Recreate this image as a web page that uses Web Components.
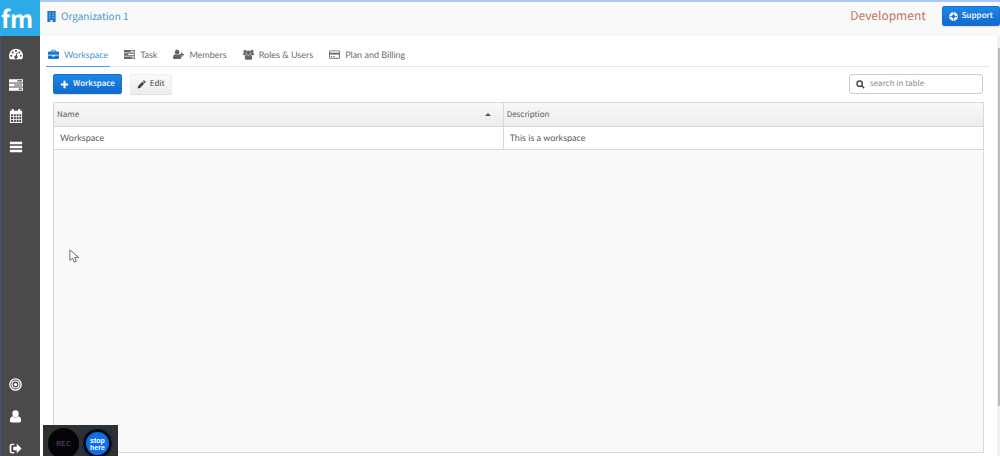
<!DOCTYPE html>
<html lang="en">
<head>
<meta charset="utf-8">
<title>Organization 1</title>
<style>
html, body { height: 100%; }
body { margin: 0; overflow: hidden; font: 8px/14px "Noto Sans CJK SC", "Noto Sans", sans-serif; text-rendering: geometricPrecision; color: #5c5c5c; background: #fff; }
</style>
</head>
<body>
<fm-app></fm-app>
<script>
const ICONS = {
  building: '<path d="M2 0h12v16H9.500v-3h-3v3H2z"/><path fill="#fff" opacity=".5" d="M4.500 2h2v2h-2zM9.500 2h2v2h-2zM4.500 5.500h2v2h-2zM9.500 5.500h2v2h-2zM4.500 9h2v2h-2zM9.500 9h2v2h-2z"/>',
  gauge: '<path d="M8 2a8 8 0 0 0-8 8q0 2.400 1.200 4h13.600Q16 12.400 16 10a8 8 0 0 0-8-8z"/><g fill="#4a4a4a"><circle cx="2.600" cy="10" r="1.100"/><circle cx="4.200" cy="6.200" r="1.100"/><circle cx="8" cy="4.500" r="1.100"/><circle cx="11.800" cy="6.200" r="1.100"/><circle cx="13.400" cy="10" r="1.100"/><path d="M8.900 6.300l.9.300-.8 3.500a1.800 1.800 0 1 1-1.200-.3z"/></g>',
  tasks: '<path fill-rule="evenodd" d="M0 1.500h16v3.600H0zM9.500 2.700v1.200h5.300V2.700zM0 6.200h16v3.600H0zM6 7.400v1.200h8.800V7.400zM0 10.900h16v3.600H0zM11 12.100v1.200h3.800v-1.200z"/>',
  calendar: '<path fill-rule="evenodd" d="M1 2h2V.8q0-.8.8-.8h1q.8 0 .8.800V2h4.800V.8q0-.8.8-.8h1q.8 0 .8.800V2h2v14H1zM2.200 6v2.300h2.500V6zM5.600 6v2.300h2.200V6zM8.700 6v2.300h2.200V6zM11.800 6v2.300h2.100V6zM2.200 9.200v2.300h2.500V9.200zM5.600 9.200v2.300h2.200V9.200zM8.700 9.200v2.300h2.200V9.200zM11.800 9.200v2.300h2.100V9.200zM2.200 12.400v2.400h2.500v-2.400zM5.600 12.400v2.400h2.200v-2.400zM8.700 12.400v2.400h2.200v-2.400zM11.800 12.400v2.400h2.100v-2.400z"/>',
  menu: '<path d="M1 2h14v2.800H1zM1 6.600h14v2.800H1zM1 11.200h14v2.800H1z"/>',
  chevron: '<path d="M2 5l6 6 6-6" fill="none" stroke="currentColor" stroke-width="3"/>',
  target: '<g fill="none" stroke="currentColor"><circle cx="8" cy="8" r="7" stroke-width="1.600"/><circle cx="8" cy="8" r="4.300" stroke-width="1.500"/></g><circle cx="8" cy="8" r="2"/>',
  user: '<ellipse cx="8" cy="4.600" rx="3.900" ry="4.300"/><path d="M4.700 7.600Q8 10.600 11.300 7.600 15 8.700 15 13 15 15.500 12.500 15.500h-9Q1 15.500 1 13 1 8.700 4.700 7.600z"/>',
  exit: '<path d="M6.500 2v1.800H3.800q-1 0-1 1v6.400q0 1 1 1h2.700V14H3.500Q.8 14 .8 11.300V4.700Q.8 2 3.500 2zM5.300 5.700h4.200V2.200L15.500 8l-6 5.800v-3.500H5.300z"/>',
  briefcase: '<path fill-rule="evenodd" d="M5 3.500V2q0-1 1-1h4q1 0 1 1v1.500h3.500Q16 3.500 16 5v3.500H0V5q0-1.500 1.500-1.500zM6.300 2.300v1.200h3.400V2.300zM0 9.400h6.200V11h3.600V9.400H16V13q0 1.500-1.500 1.500h-13Q0 14.500 0 13z"/>',
  adduser: '<ellipse cx="6" cy="4.600" rx="3.300" ry="3.700"/><path d="M3 7.700Q6 10 9 7.700q3 .7 3 4.800 0 2.200-1.900 2.200H1.900q-1.900 0-1.900-2.200 0-4.100 3-4.800z"/><path d="M11.900 5h1.900v2.100H16V9h-2.200v2.200h-1.900V9H9.700V7.100h2.200z"/>',
  group: '<circle cx="3" cy="3.500" r="2.300"/><circle cx="13" cy="3.500" r="2.300"/><circle cx="8" cy="5.500" r="3.200"/><path d="M1 5.500q2 1 3.600 0Q4.600 7 5.600 8 4 8.100 3.400 9H1.500Q0 9 0 7.500 0 6 1 5.500zM15 5.500q-2 1-3.600 0 0 1.500-1 2.500 1.600.1 2.200 1h1.900Q16 9 16 7.500 16 6 15 5.500zM5.400 8.300q2.600 2 5.200 0 2.900.7 2.900 4.500 0 2.700-2 2.700H4.500q-2 0-2-2.700 0-3.800 2.900-4.500z"/>',
  card: '<path fill-rule="evenodd" d="M1.500 2h13Q16 2 16 3.500v9q0 1.500-1.500 1.500h-13Q0 14 0 12.500v-9Q0 2 1.500 2zM1.200 3.400v2.200h13.600V3.400zM1.200 8v4.700h13.600V8zM2.400 10.600h2v1h-2zM5.500 10.600h3v1h-3z"/>',
  plus: '<path d="M6.200 1.500h3.600v4.700h4.700v3.600H9.800v4.700H6.200V9.800H1.500V6.200h4.700z"/>',
  pencil: '<path d="M1 15l1-4.500L9.300 3.200l3.500 3.500L5.500 14zM10.300 2.200L11.600.9q.8-.7 1.500 0l2 2q.7.700 0 1.500l-1.300 1.300z"/>',
  search: '<circle cx="6.500" cy="6.500" r="4.800" fill="none" stroke="currentColor" stroke-width="2.400"/><path d="M9.500 11l1.700-1.700 4.300 4.300-1.700 1.800z"/>',
  support: '<circle cx="8" cy="8" r="5.500" fill="none" stroke="currentColor" stroke-width="4.500"/><path d="M7.200 1.600h1.600v3H7.200zM7.200 11.400h1.600v3H7.200zM1.600 7.200h3v1.600h-3zM11.400 7.200h3v1.600h-3z" fill="#1978dc"/>',
  pointer: '<path d="M1 1v12l3-2.600 2 4.600 2.400-1-2-4.500H11z" fill="#fff" stroke="#666" stroke-width="1.100"/>'
};

function define(name, template) {
  customElements.define(name, class extends HTMLElement {
    constructor() {
      super();
      this.attachShadow({ mode: "open" }).innerHTML =
        typeof template === "function" ? template(this) : template;
    }
  });
}

define("fm-icon", el => `
<style>:host{display:block;flex:none;width:11px;height:11px}svg{display:block;width:100%;height:100%}</style>
<svg viewBox="0 0 16 16" fill="currentColor" aria-hidden="true">${ICONS[el.getAttribute("name")]}</svg>`);

define("fm-button", `
<style>
:host{display:block;flex:none}
button{display:flex;align-items:center;gap:4px;box-sizing:border-box;height:20px;margin:0;padding:0 6px;border:1px solid #eee;border-radius:2px;background:linear-gradient(#fafafa,#ededed);box-shadow:0 1px 1px #ddd;color:#444;font:inherit;text-rendering:inherit;white-space:nowrap}
:host([primary]) button{background:linear-gradient(#1e87e5,#1269cf);border-color:#1671d4;color:#fff;font-weight:500}
::slotted(fm-icon){width:9px;height:9px}
</style>
<button type="button"><slot name="icon"></slot><slot></slot></button>`);

define("fm-sidebar", `
<style>
:host{display:flex;flex-direction:column;box-sizing:border-box;width:40px;flex:none;background:#4a4a4a;color:#fff}
.logo{display:block;height:36px;flex:none;padding-left:1px;background:#2cabe6;color:#fff;font:700 24px/36px "Noto Sans CJK SC",sans-serif;text-decoration:none}
nav{flex:1;display:flex;flex-direction:column;justify-content:space-between;border-left:1px solid #3e5577;padding:11px 0 0}
div{display:flex;flex-direction:column;gap:17px;padding-left:8px}
.bottom{gap:19px;margin-bottom:1px}
nav a{display:flex;align-items:center;gap:5px;color:#fff}
fm-icon{width:14px;height:14px}
.bottom fm-icon{width:13px;height:13px}
fm-icon.more{width:6px;height:6px;color:#34547c}
</style>
<a class="logo" href="#">fm</a>
<nav aria-label="Main">
<div>
<a href="#" aria-label="Dashboard"><fm-icon name="gauge"></fm-icon></a>
<a href="#" aria-label="Tasks"><fm-icon name="tasks"></fm-icon></a>
<a href="#" aria-label="Calendar"><fm-icon name="calendar"></fm-icon></a>
<a href="#" aria-label="Menu"><fm-icon name="menu"></fm-icon><fm-icon class="more" name="chevron"></fm-icon></a>
</div>
<div class="bottom">
<a href="#" aria-label="Focus"><fm-icon name="target"></fm-icon></a>
<a href="#" aria-label="Profile"><fm-icon name="user"></fm-icon></a>
<a href="#" aria-label="Log out"><fm-icon name="exit"></fm-icon></a>
</div>
</nav>`);

define("fm-header", `
<style>
:host{display:flex;align-items:center;box-sizing:border-box;height:36px;flex:none;padding:0 0 6px 6px;background:#f9f9f9;border-top:2px solid #a9c8f5;overflow:hidden}
a{display:flex;align-items:center;gap:4px;color:#4a94cf;text-decoration:none;font-size:10px}
a fm-icon{color:#1b76cf}
strong{margin:0 16px 0 auto;color:#b9776c;font-size:12px;line-height:18px;font-weight:400}
</style>
<a href="#"><fm-icon name="building"></fm-icon>Organization 1</a>
<strong>Development</strong>
<fm-button primary><fm-icon slot="icon" name="support"></fm-icon>Support</fm-button>`);

define("fm-tab", el => `
<style>
:host{display:block}
a{display:flex;align-items:center;gap:5px;box-sizing:border-box;height:24px;padding:0 2px;border-bottom:1px solid transparent;color:#6c6c6c;font:9px/14px Lato,sans-serif;text-decoration:none;white-space:nowrap}
:host([selected]) a{color:#4a94cf;border-color:#4f9ddb}
:host([selected]) fm-icon{color:#1b76cf}
fm-icon{color:#666}
</style>
<a href="#"${el.hasAttribute("selected") ? ' aria-current="page"' : ""}><fm-icon name="${el.getAttribute("icon")}"></fm-icon><slot></slot></a>`);

define("fm-tabs", `
<style>:host{display:flex;gap:12px;margin:7px 7px 0 6px;box-shadow:inset 0 -1px #e6e6e6}</style><slot></slot>`);

define("fm-search", `
<style>
:host{display:block;margin-left:auto}
label{display:flex;align-items:center;gap:5px;box-sizing:border-box;width:134px;height:20px;padding:0 6px;border:1px solid #ccc;border-radius:3px;background:#fff;color:#444}
fm-icon{width:9px;height:9px}
input{flex:1;min-width:0;border:0;padding:0;outline:0;background:none;font:inherit;text-rendering:inherit;color:#555}
input::placeholder{color:#8c8c8c;opacity:1}
</style>
<label><fm-icon name="search"></fm-icon><input type="search" placeholder="search in table" aria-label="search in table"></label>`);

define("fm-table", `
<style>
:host{display:block;flex:1;border:1px solid #d8d8d8;background:#f9f9f9}
table{width:100%;table-layout:fixed;border-collapse:separate;border-spacing:0}
col:first-child{width:48.4%}
th{height:23px;padding:0 3px;background:linear-gradient(#f8f8f8,#ededed);border-bottom:1px solid #d8d8d8;font-weight:400;text-align:left}
td{height:22px;padding:0 6px;background:#fff;border-bottom:1px solid #d8d8d8;font:9px/14px Lato,sans-serif}
tr>:first-child{border-right:1px solid #d8d8d8}
th div{display:flex;align-items:center;justify-content:space-between}
i{margin-right:9px;border:3px solid transparent;border-top:0;border-bottom-color:#555}
</style>
<table>
<colgroup><col><col></colgroup>
<thead><tr><th scope="col" aria-sort="ascending"><div>Name<i></i></div></th><th scope="col">Description</th></tr></thead>
<tbody><tr><td>Workspace</td><td>This is a workspace</td></tr></tbody>
</table>`);

define("fm-recorder", `
<style>
:host{position:absolute;left:43px;bottom:0;display:flex;gap:3px;box-sizing:border-box;width:75px;height:31px;padding:3px 5px 0;background:#2f3033;overflow:hidden}
button{box-sizing:border-box;flex:none;width:31px;height:31px;padding:0;border:0;border-radius:50%;background:#050507;font:8px/31px "Liberation Mono",monospace;color:#704080}
.stop{border:4px solid #050507;outline:1px solid #13427c;outline-offset:-1px;background:#0b70e8;color:#fff;font:700 7px/7px "Liberation Sans",sans-serif}
</style>
<button type="button">REC</button><button type="button" class="stop">stop<br>here</button>`);

define("fm-app", `
<style>
:host{position:relative;display:flex;height:100vh;overflow:hidden}
.page{flex:1;min-width:0;display:flex;flex-direction:column}
.body{flex:1;display:flex;min-height:0}
main{flex:1;min-width:0;display:flex;flex-direction:column}
.tools{display:flex;align-items:center;gap:8px;margin:7px 14px 8px 13px}
fm-table{margin:0 13px 3px}
.scroll{flex:none;width:3px;box-sizing:border-box;padding:12px 0 50px 1px;background:#f1f1f1}
.scroll div{height:100%;background:#bcbcbc}
.pointer{position:absolute;left:69px;top:248px;width:14px;height:16px}
</style>
<fm-sidebar></fm-sidebar>
<div class="page">
<fm-header></fm-header>
<div class="body">
<main>
<fm-tabs>
<fm-tab icon="briefcase" selected>Workspace</fm-tab>
<fm-tab icon="tasks">Task</fm-tab>
<fm-tab icon="adduser">Members</fm-tab>
<fm-tab icon="group">Roles &amp; Users</fm-tab>
<fm-tab icon="card">Plan and Billing</fm-tab>
</fm-tabs>
<div class="tools">
<fm-button primary><fm-icon slot="icon" name="plus"></fm-icon>Workspace</fm-button>
<fm-button><fm-icon slot="icon" name="pencil"></fm-icon>Edit</fm-button>
<fm-search></fm-search>
</div>
<fm-table></fm-table>
</main>
<div class="scroll"><div></div></div>
</div>
</div>
<fm-icon class="pointer" name="pointer"></fm-icon>
<fm-recorder></fm-recorder>`);
</script>
</body>
</html>
